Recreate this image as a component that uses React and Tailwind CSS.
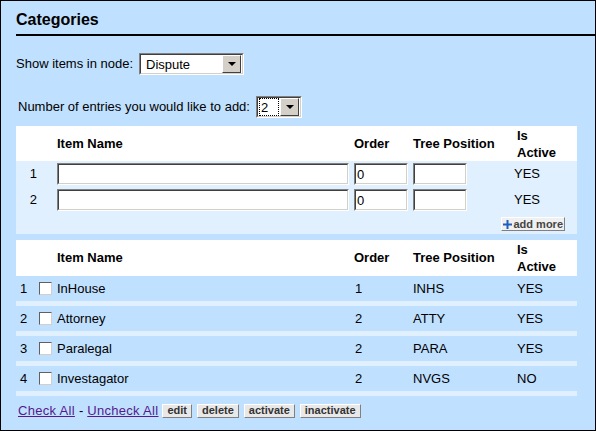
const cols = "grid grid-cols-[41px_297px_59px_104px_60px] items-center";

function Select({ value, className, focused }) {
  return (
    <div className={`h-[22px] border border-t-[#808080] border-l-[#808080] border-r-white border-b-white ${className}`}>
      <div className="h-full flex items-center bg-white border border-t-[#404040] border-l-[#404040] border-r-[#d4d0c8] border-b-[#d4d0c8]">
        {focused ? (
          <div className="flex-1 ml-[1px] h-[18px] border border-dotted border-black flex items-center pl-[1px] leading-none">{value}</div>
        ) : (
          <div className="flex-1 pl-[5px] leading-none">{value}</div>
        )}
        <div className="w-[19px] h-[18px] mx-[1px] bg-[#d4d0c8] border border-t-white border-l-white border-r-[#404040] border-b-[#404040] flex items-center justify-center">
          <div className="w-0 h-0 border-l-[4px] border-r-[4px] border-t-[4px] border-l-transparent border-r-transparent border-t-black" />
        </div>
      </div>
    </div>
  );
}

function TextBox({ value, className }) {
  return (
    <div className={`h-[22px] border border-t-[#808080] border-l-[#808080] border-r-white border-b-white ${className}`}>
      <input
        type="text"
        defaultValue={value}
        className="w-full h-full bg-white border border-t-[#404040] border-l-[#404040] border-r-[#d4d0c8] border-b-[#d4d0c8] px-[1px] text-[13px] outline-none"
      />
    </div>
  );
}

function Checkbox() {
  return <div className="w-[13px] h-[13px] bg-white border border-t-[#606060] border-l-[#606060] border-r-[#d4d0c8] border-b-[#d4d0c8]" />;
}

function SmallButton({ children }) {
  return (
    <button className="h-[14px] px-[4px] bg-[#e8e8e8] border border-t-white border-l-white border-r-[#808080] border-b-[#808080] text-[11px] leading-none font-bold text-[#333]">
      {children}
    </button>
  );
}

const newRows = [1, 2];

const items = [
  { n: 1, name: "InHouse", order: 1, pos: "INHS", active: "YES" },
  { n: 2, name: "Attorney", order: 2, pos: "ATTY", active: "YES" },
  { n: 3, name: "Paralegal", order: 2, pos: "PARA", active: "YES" },
  { n: 4, name: "Investagator", order: 2, pos: "NVGS", active: "NO" },
];

function HeaderRow({ height }) {
  return (
    <div className={`${cols} bg-white font-bold ${height}`}>
      <div />
      <div>Item Name</div>
      <div>Order</div>
      <div>Tree Position</div>
      <div className="leading-[17px]">
        Is
        <br />
        Active
      </div>
    </div>
  );
}

export default function App() {
  return (
    <div className="w-[596px] h-[431px] bg-[#c0e0ff] border border-black font-['Liberation_Sans',Arial,sans-serif] text-[13px] text-black overflow-hidden">
      <div className="ml-[15px] h-[35px] border-b-2 border-black flex items-end pb-[5px]">
        <h1 className="text-[16px] leading-[19px] font-bold">Categories</h1>
      </div>

      <div className="mt-[17px] ml-[15px] flex items-center h-[22px]">
        <span className="w-[123px]">Show items in node:</span>
        <Select value="Dispute" className="w-[105px]" />
      </div>

      <div className="mt-[21px] ml-[17px] flex items-center h-[22px]">
        <span className="w-[238px]">Number of entries you would like to add:</span>
        <Select value="2" className="w-[46px]" focused />
      </div>

      {/* new entries */}
      <div className="mt-[8px] ml-[15px] w-[561px]">
        <HeaderRow height="h-[35px]" />
        <div className="bg-[#e0f0ff] pt-[2px] pb-[3px]">
          {newRows.map((n, i) => (
            <div key={n} className={`${cols} h-[22px] ${i > 0 ? "mt-[4px]" : ""}`}>
              <div className="text-right pr-[20px]">{n}</div>
              <TextBox className="w-[292px]" />
              <TextBox value="0" className="w-[54px]" />
              <TextBox className="w-[54px]" />
              <div className="-ml-[3px]">YES</div>
            </div>
          ))}
          <div className="flex justify-end mt-[6px] pr-[12px]">
            <button className="h-[14px] pl-[1px] pr-[1px] flex items-center gap-[1px] bg-[#f0f0f0] border border-t-white border-l-white border-r-[#808080] border-b-[#808080] text-[11px] leading-none font-bold text-[#444]">
              <svg width="9" height="9" viewBox="0 0 9 9">
                <rect x="3.5" y="0" width="2" height="9" fill="#1f5fbf" />
                <rect x="0" y="3.5" width="9" height="2" fill="#1f5fbf" />
              </svg>
              add more
            </button>
          </div>
        </div>
      </div>

      {/* existing items */}
      <div className="mt-[6px] ml-[15px] w-[561px]">
        <HeaderRow height="h-[36px]" />
        {items.map((it) => (
          <div key={it.n}>
            <div className={`${cols} h-[25px]`}>
              <div className="flex items-center">
                <span className="pl-[4px] w-[23px]">{it.n}</span>
                <Checkbox />
              </div>
              <div>{it.name}</div>
              <div className="pl-[1px]">{it.order}</div>
              <div>{it.pos}</div>
              <div>{it.active}</div>
            </div>
            <div className="h-[5px] bg-[#e0f0ff]" />
          </div>
        ))}
      </div>

      <div className="mt-[7px] ml-[17px] h-[15px] flex items-center">
        <a href="#" className="text-[#551a8b] underline tracking-[0.3px]">Check All</a>
        <span className="mx-[4px]">-</span>
        <a href="#" className="text-[#551a8b] underline tracking-[0.3px]">Uncheck All</a>
        <div className="ml-[4px] flex gap-[5px]">
          <SmallButton>edit</SmallButton>
          <SmallButton>delete</SmallButton>
          <SmallButton>activate</SmallButton>
          <SmallButton>inactivate</SmallButton>
        </div>
      </div>
    </div>
  );
}
